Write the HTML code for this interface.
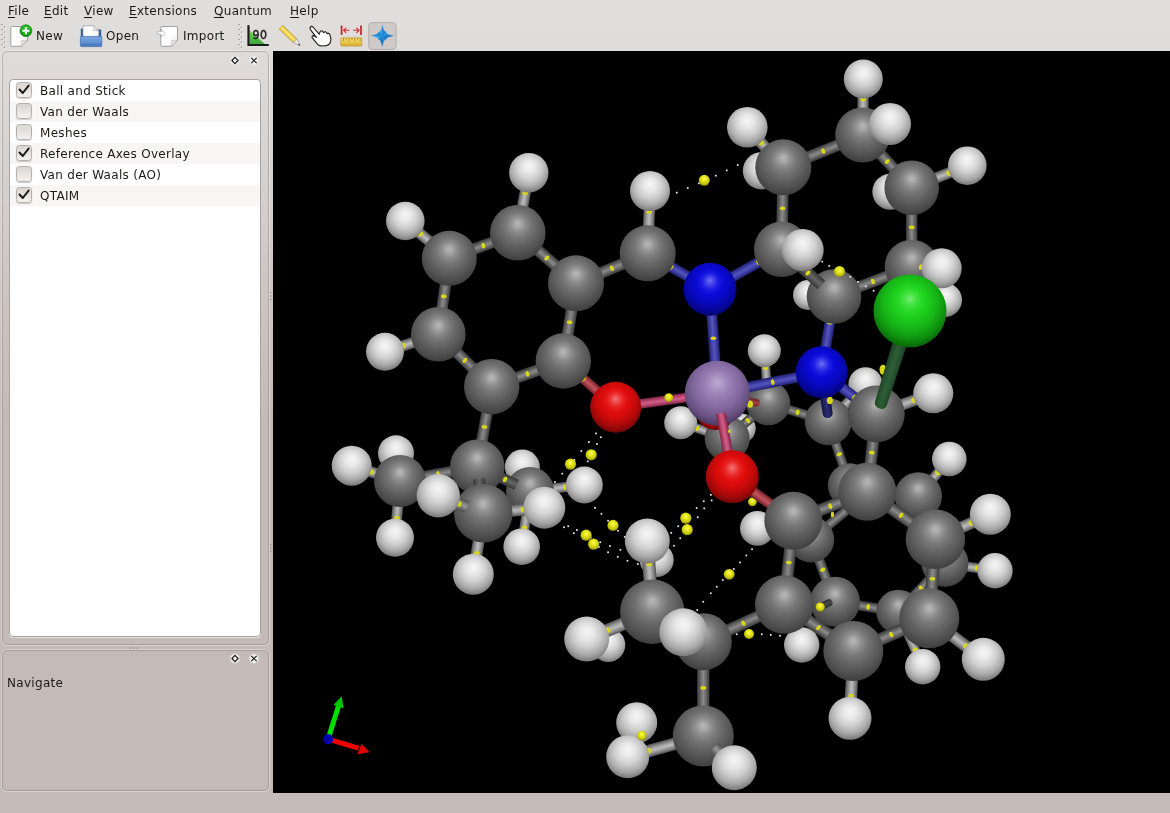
<!DOCTYPE html>
<html><head><meta charset="utf-8"><title>Avogadro</title>
<style>
html,body{margin:0;padding:0}
body{width:1170px;height:813px;overflow:hidden;position:relative;
 font-family:"DejaVu Sans","Liberation Sans",sans-serif;font-size:12px;letter-spacing:0.3px;color:#1c1a19;
 background:linear-gradient(to bottom,#e1dfdd 0px,#dedbd9 60px,#d3cfcc 200px,#c9c2bf 330px,#c4bbb8 420px,#c4bbb8 813px);}
.abs{position:absolute}
.menu,.tb,.list,.nav{will-change:opacity;opacity:.999}
.menu span{position:absolute;top:4px;white-space:nowrap}
.menu i{position:absolute;left:0;top:13px;height:1px;background:#1c1a19}
.tb span{position:absolute;top:29px;white-space:nowrap}
.dock{position:absolute;left:2px;width:265px;border:1px solid rgba(120,110,105,.38);border-radius:5px;box-shadow:0 0 0 1px rgba(255,255,255,.35)}
.list{position:absolute;left:9px;top:79px;width:250px;height:556px;background:#fff;border:1px solid #a8a19d;border-radius:4px;box-shadow:0 1px 0 rgba(255,255,255,.6);overflow:hidden}
.row{position:absolute;left:0;width:250px;height:21px}
.row.alt{background:#f8f7f6}
.row span{position:absolute;left:30px;top:4px;white-space:nowrap}
.cb{position:absolute;left:6px;top:2px;width:14px;height:14px;border-radius:3.5px;border:1px solid #b5afab;background:linear-gradient(#dad6d3,#f4f2f1);box-shadow:0 1px 1px rgba(0,0,0,.18)}
.cb svg{position:absolute;left:-1px;top:-2px}
.tbtn{position:absolute;width:11px;height:11px;border-radius:6px;background:radial-gradient(circle,#f4f3f2 0,#eceae8 60%,rgba(230,228,226,0) 100%)}
#gl{position:absolute;left:273px;top:51px;width:897px;height:742px;background:#000;overflow:hidden}
</style></head><body>
<div class="menu">
<span style="left:8px">File<i style="width:6.5px"></i></span><span style="left:44px">Edit<i style="width:7.5px"></i></span><span style="left:84px">View<i style="width:8px"></i></span><span style="left:129px">Extensions<i style="width:7.5px"></i></span><span style="left:214px">Quantum<i style="width:9.5px"></i></span><span style="left:290px">Help<i style="width:9px"></i></span>
</div>
<div class="tb">
<span style="left:36px">New</span><span style="left:106px">Open</span><span style="left:183px">Import</span>
</div>
<svg class="abs" style="left:0;top:0" width="420" height="52" viewBox="0 0 420 52">
<defs>
<linearGradient id="pg" x1="0" y1="0" x2="1" y2="1"><stop offset="0" stop-color="#fdfdfd"/><stop offset=".55" stop-color="#ffffff"/><stop offset="1" stop-color="#e4e4e4"/></linearGradient>
<linearGradient id="fold" x1="0" y1="0" x2="1" y2="1"><stop offset="0" stop-color="#ffffff"/><stop offset="1" stop-color="#c4c4c4"/></linearGradient>
<radialGradient id="gplus" cx=".5" cy=".35" r=".7"><stop offset="0" stop-color="#3ccc30"/><stop offset="1" stop-color="#0c8c10"/></radialGradient>
<linearGradient id="fblue" x1="0" y1="0" x2="0" y2="1"><stop offset="0" stop-color="#7aa8e0"/><stop offset=".75" stop-color="#5a8ccc"/><stop offset="1" stop-color="#4a78b8"/></linearGradient>
<linearGradient id="gtri" x1="0" y1="0" x2="0" y2="1"><stop offset="0" stop-color="#7ccc60"/><stop offset="1" stop-color="#38a838"/></linearGradient>
<linearGradient id="ruler" x1="0" y1="0" x2="0" y2="1"><stop offset="0" stop-color="#f4e070"/><stop offset="1" stop-color="#d8b030"/></linearGradient>
<linearGradient id="star1" x1="0" y1="0" x2="1" y2="1"><stop offset="0" stop-color="#70d0f8"/><stop offset=".5" stop-color="#2898e0"/><stop offset="1" stop-color="#0c5cb0"/></linearGradient>
</defs>
<!-- toolbar handles -->
<g fill="#8c8682">
<rect x="1.5" y="24" width="1.2" height="1.2"/><rect x="3.8" y="26.5" width="1.2" height="1.2"/><rect x="1.5" y="29" width="1.2" height="1.2"/><rect x="3.8" y="31.5" width="1.2" height="1.2"/><rect x="1.5" y="34" width="1.2" height="1.2"/><rect x="3.8" y="36.5" width="1.2" height="1.2"/><rect x="1.5" y="39" width="1.2" height="1.2"/><rect x="3.8" y="41.5" width="1.2" height="1.2"/><rect x="1.5" y="44" width="1.2" height="1.2"/><rect x="3.8" y="46.5" width="1.2" height="1.2"/>
<rect x="238.5" y="24" width="1.2" height="1.2"/><rect x="240.8" y="26.5" width="1.2" height="1.2"/><rect x="238.5" y="29" width="1.2" height="1.2"/><rect x="240.8" y="31.5" width="1.2" height="1.2"/><rect x="238.5" y="34" width="1.2" height="1.2"/><rect x="240.8" y="36.5" width="1.2" height="1.2"/><rect x="238.5" y="39" width="1.2" height="1.2"/><rect x="240.8" y="41.5" width="1.2" height="1.2"/><rect x="238.5" y="44" width="1.2" height="1.2"/><rect x="240.8" y="46.5" width="1.2" height="1.2"/>
</g>
<g fill="#f6f5f4">
<rect x="2.5" y="25" width="1.2" height="1.2"/><rect x="4.8" y="27.5" width="1.2" height="1.2"/><rect x="2.5" y="30" width="1.2" height="1.2"/><rect x="4.8" y="32.5" width="1.2" height="1.2"/><rect x="2.5" y="35" width="1.2" height="1.2"/><rect x="4.8" y="37.5" width="1.2" height="1.2"/><rect x="2.5" y="40" width="1.2" height="1.2"/><rect x="4.8" y="42.5" width="1.2" height="1.2"/><rect x="2.5" y="45" width="1.2" height="1.2"/><rect x="4.8" y="47.5" width="1.2" height="1.2"/>
<rect x="239.5" y="25" width="1.2" height="1.2"/><rect x="241.8" y="27.5" width="1.2" height="1.2"/><rect x="239.5" y="30" width="1.2" height="1.2"/><rect x="241.8" y="32.5" width="1.2" height="1.2"/><rect x="239.5" y="35" width="1.2" height="1.2"/><rect x="241.8" y="37.5" width="1.2" height="1.2"/><rect x="239.5" y="40" width="1.2" height="1.2"/><rect x="241.8" y="42.5" width="1.2" height="1.2"/><rect x="239.5" y="45" width="1.2" height="1.2"/><rect x="241.8" y="47.5" width="1.2" height="1.2"/>
</g>
<!-- New -->
<path d="M11.5 26.5 H27 Q27.5 26.5 27.5 27 V40.5 L21.5 46.3 H11.5 Q10.8 46.3 10.8 45.6 V27.2 Q10.8 26.5 11.5 26.5 Z" fill="url(#pg)" stroke="#9a9a9a" stroke-width=".9"/>
<path d="M27.5 40.5 L21.5 46.3 Q22.6 42.6 21.8 40.6 Q24.4 41.4 27.5 40.5 Z" fill="url(#fold)" stroke="#a8a8a8" stroke-width=".6"/>
<circle cx="25.9" cy="30.7" r="6" fill="url(#gplus)" stroke="#0a8a10" stroke-width=".6"/>
<path d="M25.9 27.2 V34.2 M22.4 30.7 H29.4" stroke="#fff" stroke-width="2.1"/>
<!-- Open -->
<path d="M80.8 29.6 Q80.8 28.6 81.8 28.6 H85 V38 H80.8 Z" fill="#2c5ca4"/>
<path d="M97.5 29.5 H100.2 Q101.2 29.5 101.2 30.5 V38 H97.5 Z" fill="#2c5ca4"/>
<path d="M83 25.8 H93.5 L98.8 31 V40 H83 Z" fill="url(#pg)" stroke="#a0a0a0" stroke-width=".8"/>
<path d="M93.5 25.8 L98.8 31 Q95.6 30.2 93.2 30.9 Q94.2 28.4 93.5 25.8 Z" fill="url(#fold)" stroke="#a8a8a8" stroke-width=".5"/>
<path d="M80.4 37.6 Q80.4 36.4 81.6 36.4 H100.6 Q101.8 36.4 101.8 37.6 V45.4 Q101.8 46.6 100.6 46.6 H81.6 Q80.4 46.6 80.4 45.4 Z" fill="url(#fblue)" stroke="#3c6cb0" stroke-width=".7"/>
<path d="M81 44.3 H101.2" stroke="#3e6eb4" stroke-width=".8"/>
<!-- Import -->
<path d="M161.5 26.5 H177 Q177.5 26.5 177.5 27 V40.5 L171.5 46.3 H161.5 Q160.8 46.3 160.8 45.6 V27.2 Q160.8 26.5 161.5 26.5 Z" fill="url(#pg)" stroke="#9a9a9a" stroke-width=".9"/>
<path d="M177.5 40.5 L171.5 46.3 Q172.6 42.6 171.8 40.6 Q174.4 41.4 177.5 40.5 Z" fill="url(#fold)" stroke="#a8a8a8" stroke-width=".6"/>
<path d="M157.4 31.8 H161.2 V29.2 L165 33.2 L161.2 37.2 V34.6 H157.4 Z" fill="#fff" stroke="#a4a4a4" stroke-width=".7" stroke-linejoin="round"/>
<!-- angle 90 -->
<path d="M249.6 30.3 V44 H264.8 Z" fill="url(#gtri)"/>
<path d="M248.5 25.2 V45 H268.8" fill="none" stroke="#1a1a1a" stroke-width="2.2"/>
<text x="252.6" y="38.6" font-family="'DejaVu Sans','Liberation Sans',sans-serif" font-size="11.5" font-weight="normal" fill="#1a1a1a" stroke="#1a1a1a" stroke-width=".45" textLength="14.6" lengthAdjust="spacingAndGlyphs">90</text>
<!-- pencil -->
<g transform="translate(281 27.2) rotate(44)">
<rect x="0" y="-2.5" width="19.5" height="5" fill="#f0d040" stroke="#a8882c" stroke-width=".7"/>
<rect x="0" y="-0.9" width="19.5" height="1.8" fill="#f8e478"/>
<path d="M19.5 -2.5 L26.5 0 L19.5 2.5 Z" fill="#f4f0ec" stroke="#8c8880" stroke-width=".6"/>
<path d="M24.4 -0.8 L26.8 0 L24.4 0.8 Z" fill="#333"/>
</g>
<!-- hand -->
<path d="M310.2 27.4 Q311.4 25.6 313 27 L319.2 34.2 L320.2 31.6 Q321.6 30 323 31.6 L323.6 32.6 Q325 30.8 326.6 32.6 L327.2 33.8 Q328.8 32.6 329.8 34.6 Q331.6 38.4 330.6 42 Q329.6 44.8 326.4 45.6 L321.8 46 Q318.4 45.8 316.6 43.2 L312.2 37.6 Q311.6 36 313.2 35.6 Q314.6 35.6 316.4 37.4 L310.6 29.8 Q309.6 28.4 310.2 27.4 Z" fill="#fff" stroke="#1c1c1c" stroke-width="1.1" stroke-linejoin="round"/>
<!-- measure -->
<path d="M341.6 25.6 V35 M361 25.6 V35" stroke="#c8202c" stroke-width="1.7"/>
<path d="M343.6 30.3 H349.4 M346.2 27.8 L343.6 30.3 L346.2 32.8 M359 30.3 H353.2 M356.4 27.8 L359 30.3 L356.4 32.8" fill="none" stroke="#d02834" stroke-width="1.1"/>
<rect x="340.8" y="37.8" width="21" height="8.2" rx=".8" fill="url(#ruler)" stroke="#b89428" stroke-width=".7"/>
<path d="M343.5 38 V41 M346.3 38 V40 M349.1 38 V41 M351.9 38 V40 M354.7 38 V41 M357.5 38 V40 M360.2 38 V41" stroke="#a88820" stroke-width=".8"/>
<!-- navigate (checked) -->
<rect x="368.8" y="22.6" width="27.2" height="26.8" rx="3.5" fill="#cfcac7" stroke="#b2aca8" stroke-width="1"/>
<path d="M382.3 24.6 Q383.6 31.8 386.0 32.0 Q386.4 34.6 393.9 35.7 Q386.4 36.8 386.0 39.4 Q383.6 39.6 382.3 47 Q381 39.6 378.6 39.4 Q378.2 36.8 370.6 35.7 Q378.2 34.6 378.6 32.0 Q381 31.8 382.3 24.6 Z" fill="url(#star1)"/>
<path d="M382.3 24.6 Q383.6 31.8 386.0 32.0 L382.3 35.7 Z M393.9 35.7 Q386.4 36.8 386.0 39.4 L382.3 35.7 Z M382.3 47 Q381 39.6 378.6 39.4 L382.3 35.7 Z M370.6 35.7 Q378.2 34.6 378.6 32.0 L382.3 35.7Z" fill="#1266b8" opacity=".5"/>
</svg>

<div class="dock" style="top:51px;height:592px"></div>
<div class="dock" style="top:650px;height:139px"></div>
<div class="list">
<div class="row" style="top:0"><div class="cb"><svg width="16" height="16" viewBox="0 0 16 16"><path d="M3.5 8.5 L6.8 12 L12.6 4.6" fill="none" stroke="#1a1a1a" stroke-width="2" stroke-linecap="round" stroke-linejoin="round"/></svg></div><span>Ball and Stick</span></div>
<div class="row alt" style="top:21px"><div class="cb"></div><span>Van der Waals</span></div>
<div class="row" style="top:42px"><div class="cb"></div><span>Meshes</span></div>
<div class="row alt" style="top:63px"><div class="cb"><svg width="16" height="16" viewBox="0 0 16 16"><path d="M3.5 8.5 L6.8 12 L12.6 4.6" fill="none" stroke="#1a1a1a" stroke-width="2" stroke-linecap="round" stroke-linejoin="round"/></svg></div><span>Reference Axes Overlay</span></div>
<div class="row" style="top:84px"><div class="cb"></div><span>Van der Waals (AO)</span></div>
<div class="row alt" style="top:105px"><div class="cb"><svg width="16" height="16" viewBox="0 0 16 16"><path d="M3.5 8.5 L6.8 12 L12.6 4.6" fill="none" stroke="#1a1a1a" stroke-width="2" stroke-linecap="round" stroke-linejoin="round"/></svg></div><span>QTAIM</span></div>
</div>
<div class="abs nav" style="left:7px;top:676px">Navigate</div>
<svg class="abs" style="left:225px;top:52px" width="45" height="18" viewBox="225 52 45 18">
<defs><radialGradient id="halo"><stop offset="0" stop-color="#f6f5f4"/><stop offset=".7" stop-color="#efedeb"/><stop offset="1" stop-color="#e4e1df" stop-opacity="0"/></radialGradient></defs>
<circle cx="235" cy="60.5" r="5.6" fill="url(#halo)"/><circle cx="254" cy="60.5" r="5.6" fill="url(#halo)"/>
<path d="M235 57.4 L238.1 60.5 L235 63.6 L231.9 60.5 Z" fill="none" stroke="#1c1c1c" stroke-width="1.2"/>
<path d="M251.3 57.8 L256.7 63.2 M256.7 57.8 L251.3 63.2" stroke="#1c1c1c" stroke-width="1.2"/>
</svg>
<svg class="abs" style="left:225px;top:650px" width="45" height="18" viewBox="225 52 45 18">
<circle cx="235" cy="60.5" r="5.6" fill="url(#halo)"/><circle cx="254" cy="60.5" r="5.6" fill="url(#halo)"/>
<path d="M235 57.4 L238.1 60.5 L235 63.6 L231.9 60.5 Z" fill="none" stroke="#1c1c1c" stroke-width="1.2"/>
<path d="M251.3 57.8 L256.7 63.2 M256.7 57.8 L251.3 63.2" stroke="#1c1c1c" stroke-width="1.2"/>
</svg>
<svg class="abs" style="left:128px;top:646px" width="14" height="4"><rect x="2" y="1.5" width="1.2" height="1.2" fill="#8c8682"/><rect x="5.5" y="1.5" width="1.2" height="1.2" fill="#8c8682"/><rect x="9" y="1.5" width="1.2" height="1.2" fill="#8c8682"/></svg>
<svg class="abs" style="left:268px;top:290px" width="5" height="14"><rect x="2" y="2" width="1.2" height="1.2" fill="#8c8682"/><rect x="2" y="5.5" width="1.2" height="1.2" fill="#8c8682"/><rect x="2" y="9" width="1.2" height="1.2" fill="#8c8682"/></svg>
<svg class="abs" style="left:268px;top:542px" width="5" height="14"><rect x="2" y="2" width="1.2" height="1.2" fill="#8c8682"/><rect x="2" y="5.5" width="1.2" height="1.2" fill="#8c8682"/><rect x="2" y="9" width="1.2" height="1.2" fill="#8c8682"/></svg>

<div id="gl">
<svg width="897" height="742" viewBox="273 51 897 742" style="position:absolute;left:0;top:0" shape-rendering="geometricPrecision"><defs>
<radialGradient id="gH" cx=".5" cy="0.41" r="0.62" fx=".5" fy="0.33"><stop offset="0" stop-color="#f6f6f6"/><stop offset="0.25" stop-color="#e8e8e8"/><stop offset="0.5" stop-color="#cecece"/><stop offset="0.75" stop-color="#a8a8a8"/><stop offset="1" stop-color="#6e6e6e"/></radialGradient>
<radialGradient id="gC" cx=".5" cy="0.41" r="0.62" fx=".5" fy="0.33"><stop offset="0" stop-color="#b8b8b8"/><stop offset="0.1" stop-color="#a8a8a8"/><stop offset="0.22" stop-color="#8e8e8e"/><stop offset="0.38" stop-color="#767676"/><stop offset="0.58" stop-color="#626262"/><stop offset="0.8" stop-color="#4e4e4e"/><stop offset="1" stop-color="#3a3a3a"/></radialGradient>
<radialGradient id="gN" cx=".5" cy="0.41" r="0.62" fx=".5" fy="0.33"><stop offset="0" stop-color="#7070f0"/><stop offset="0.12" stop-color="#4444ec"/><stop offset="0.25" stop-color="#1c1ce4"/><stop offset="0.4" stop-color="#0a0ad8"/><stop offset="0.6" stop-color="#0808c0"/><stop offset="0.8" stop-color="#06069c"/><stop offset="1" stop-color="#040460"/></radialGradient>
<radialGradient id="gO" cx=".5" cy="0.41" r="0.62" fx=".5" fy="0.33"><stop offset="0" stop-color="#f07878"/><stop offset="0.12" stop-color="#ee4848"/><stop offset="0.25" stop-color="#e82020"/><stop offset="0.4" stop-color="#e00c0c"/><stop offset="0.6" stop-color="#c80a0a"/><stop offset="0.8" stop-color="#a00808"/><stop offset="1" stop-color="#600404"/></radialGradient>
<radialGradient id="gMn" cx=".5" cy="0.41" r="0.62" fx=".5" fy="0.33"><stop offset="0" stop-color="#c0acd0"/><stop offset="0.12" stop-color="#b09ac6"/><stop offset="0.25" stop-color="#a086ba"/><stop offset="0.4" stop-color="#9276ae"/><stop offset="0.6" stop-color="#80669c"/><stop offset="0.8" stop-color="#665080"/><stop offset="1" stop-color="#403052"/></radialGradient>
<radialGradient id="gCl" cx=".5" cy="0.41" r="0.62" fx=".5" fy="0.33"><stop offset="0" stop-color="#78ec78"/><stop offset="0.12" stop-color="#48e448"/><stop offset="0.25" stop-color="#28da28"/><stop offset="0.4" stop-color="#1ccc1c"/><stop offset="0.6" stop-color="#16b416"/><stop offset="0.8" stop-color="#0e900e"/><stop offset="1" stop-color="#075807"/></radialGradient>
<radialGradient id="gY" cx=".5" cy="0.41" r="0.62" fx=".5" fy="0.33"><stop offset="0" stop-color="#fafa70"/><stop offset="0.3" stop-color="#ecec20"/><stop offset="0.7" stop-color="#c8c810"/><stop offset="1" stop-color="#808008"/></radialGradient>
<linearGradient id="bC" x1="0" y1="0" x2="0" y2="1"><stop offset="0" stop-color="#383838"/><stop offset=".28" stop-color="#686868"/><stop offset=".5" stop-color="#8a8a8a"/><stop offset=".72" stop-color="#686868"/><stop offset="1" stop-color="#383838"/></linearGradient>
<linearGradient id="bH" x1="0" y1="0" x2="0" y2="1"><stop offset="0" stop-color="#525252"/><stop offset=".28" stop-color="#969696"/><stop offset=".5" stop-color="#bcbcbc"/><stop offset=".72" stop-color="#969696"/><stop offset="1" stop-color="#525252"/></linearGradient>
<linearGradient id="bN" x1="0" y1="0" x2="0" y2="1"><stop offset="0" stop-color="#20206c"/><stop offset=".25" stop-color="#3a3aa0"/><stop offset=".5" stop-color="#5454bc"/><stop offset=".75" stop-color="#3a3aa0"/><stop offset="1" stop-color="#20206c"/></linearGradient>
<linearGradient id="bO" x1="0" y1="0" x2="0" y2="1"><stop offset="0" stop-color="#742444"/><stop offset=".25" stop-color="#b44068"/><stop offset=".5" stop-color="#d06088"/><stop offset=".75" stop-color="#b44068"/><stop offset="1" stop-color="#742444"/></linearGradient>
<linearGradient id="bOC" x1="0" y1="0" x2="0" y2="1"><stop offset="0" stop-color="#6a2028"/><stop offset=".25" stop-color="#a03c44"/><stop offset=".5" stop-color="#c4545c"/><stop offset=".75" stop-color="#a03c44"/><stop offset="1" stop-color="#6a2028"/></linearGradient>
<linearGradient id="bCl" x1="0" y1="0" x2="0" y2="1"><stop offset="0" stop-color="#1c4024"/><stop offset=".3" stop-color="#28542f"/><stop offset=".5" stop-color="#2e5e36"/><stop offset=".7" stop-color="#28542f"/><stop offset="1" stop-color="#1c4024"/></linearGradient>
<linearGradient id="bN2" x1="0" y1="0" x2="0" y2="1"><stop offset="0" stop-color="#141444"/><stop offset=".5" stop-color="#2c2c74"/><stop offset="1" stop-color="#141444"/></linearGradient>
<linearGradient id="bD" x1="0" y1="0" x2="0" y2="1"><stop offset="0" stop-color="#2c2c2c"/><stop offset=".5" stop-color="#4a4a4a"/><stop offset="1" stop-color="#2c2c2c"/></linearGradient>
<linearGradient id="bR" x1="0" y1="0" x2="0" y2="1"><stop offset="0" stop-color="#6a2424"/><stop offset=".5" stop-color="#a04040"/><stop offset="1" stop-color="#6a2424"/></linearGradient>
<linearGradient id="bCd" x1="0" y1="0" x2="0" y2="1"><stop offset="0" stop-color="#363636"/><stop offset=".5" stop-color="#666666"/><stop offset="1" stop-color="#363636"/></linearGradient>
<linearGradient id="bHd" x1="0" y1="0" x2="0" y2="1"><stop offset="0" stop-color="#4e4e4e"/><stop offset=".5" stop-color="#989898"/><stop offset="1" stop-color="#4e4e4e"/></linearGradient>
</defs>
<rect x="675.9" y="191.8" width="1.7" height="1.7" fill="#f0f0f0"/><rect x="686.9" y="187.2" width="1.7" height="1.7" fill="#f0f0f0"/><rect x="698.1" y="182.5" width="1.7" height="1.7" fill="#f0f0f0"/><rect x="714.9" y="174.8" width="1.7" height="1.7" fill="#f0f0f0"/><rect x="725.9" y="169.5" width="1.7" height="1.7" fill="#f0f0f0"/><rect x="736.9" y="164.2" width="1.7" height="1.7" fill="#f0f0f0"/>
<rect x="595.2" y="432.6" width="1.7" height="1.7" fill="#f0f0f0"/><rect x="599.9" y="436.4" width="1.7" height="1.7" fill="#f0f0f0"/><rect x="588.0" y="441.3" width="1.7" height="1.7" fill="#f0f0f0"/><rect x="596.1" y="443.2" width="1.7" height="1.7" fill="#f0f0f0"/><rect x="580.5" y="450.1" width="1.7" height="1.7" fill="#f0f0f0"/><rect x="586.9" y="460.5" width="1.7" height="1.7" fill="#f0f0f0"/><rect x="573.5" y="459.0" width="1.7" height="1.7" fill="#f0f0f0"/><rect x="561.4" y="472.8" width="1.7" height="1.7" fill="#f0f0f0"/><rect x="554.1" y="481.2" width="1.7" height="1.7" fill="#f0f0f0"/>
<rect x="589.0" y="500.0" width="1.7" height="1.7" fill="#f0f0f0"/><rect x="594.2" y="507.0" width="1.7" height="1.7" fill="#f0f0f0"/><rect x="600.6" y="512.9" width="1.7" height="1.7" fill="#f0f0f0"/><rect x="607.2" y="519.9" width="1.7" height="1.7" fill="#f0f0f0"/><rect x="617.2" y="529.9" width="1.7" height="1.7" fill="#f0f0f0"/><rect x="623.9" y="536.1" width="1.7" height="1.7" fill="#f0f0f0"/>
<rect x="558.5" y="520.2" width="1.7" height="1.7" fill="#f0f0f0"/><rect x="563.2" y="526.4" width="1.7" height="1.7" fill="#f0f0f0"/><rect x="567.4" y="525.4" width="1.7" height="1.7" fill="#f0f0f0"/><rect x="573.0" y="532.4" width="1.7" height="1.7" fill="#f0f0f0"/><rect x="576.0" y="529.2" width="1.7" height="1.7" fill="#f0f0f0"/><rect x="589.9" y="536.8" width="1.7" height="1.7" fill="#f0f0f0"/><rect x="599.4" y="541.4" width="1.7" height="1.7" fill="#f0f0f0"/><rect x="598.0" y="546.1" width="1.7" height="1.7" fill="#f0f0f0"/><rect x="609.1" y="545.2" width="1.7" height="1.7" fill="#f0f0f0"/><rect x="607.2" y="551.4" width="1.7" height="1.7" fill="#f0f0f0"/><rect x="619.5" y="548.9" width="1.7" height="1.7" fill="#f0f0f0"/><rect x="616.9" y="555.9" width="1.7" height="1.7" fill="#f0f0f0"/><rect x="626.6" y="559.9" width="1.7" height="1.7" fill="#f0f0f0"/><rect x="637.0" y="563.1" width="1.7" height="1.7" fill="#f0f0f0"/>
<rect x="710.0" y="494.0" width="1.7" height="1.7" fill="#f0f0f0"/><rect x="710.8" y="499.6" width="1.7" height="1.7" fill="#f0f0f0"/><rect x="702.9" y="500.4" width="1.7" height="1.7" fill="#f0f0f0"/><rect x="703.4" y="507.5" width="1.7" height="1.7" fill="#f0f0f0"/><rect x="695.8" y="507.2" width="1.7" height="1.7" fill="#f0f0f0"/><rect x="696.9" y="516.4" width="1.7" height="1.7" fill="#f0f0f0"/><rect x="677.4" y="525.4" width="1.7" height="1.7" fill="#f0f0f0"/><rect x="670.4" y="532.0" width="1.7" height="1.7" fill="#f0f0f0"/><rect x="679.4" y="537.4" width="1.7" height="1.7" fill="#f0f0f0"/><rect x="673.1" y="544.9" width="1.7" height="1.7" fill="#f0f0f0"/>
<rect x="755.9" y="541.0" width="1.7" height="1.7" fill="#f0f0f0"/><rect x="751.2" y="548.4" width="1.7" height="1.7" fill="#f0f0f0"/><rect x="745.5" y="554.6" width="1.7" height="1.7" fill="#f0f0f0"/><rect x="739.1" y="561.6" width="1.7" height="1.7" fill="#f0f0f0"/><rect x="732.9" y="568.1" width="1.7" height="1.7" fill="#f0f0f0"/><rect x="721.9" y="579.1" width="1.7" height="1.7" fill="#f0f0f0"/><rect x="715.9" y="585.9" width="1.7" height="1.7" fill="#f0f0f0"/><rect x="709.9" y="592.4" width="1.7" height="1.7" fill="#f0f0f0"/><rect x="702.4" y="600.9" width="1.7" height="1.7" fill="#f0f0f0"/><rect x="696.4" y="609.1" width="1.7" height="1.7" fill="#f0f0f0"/>
<rect x="735.9" y="633.4" width="1.7" height="1.7" fill="#f0f0f0"/><rect x="760.9" y="633.4" width="1.7" height="1.7" fill="#f0f0f0"/><rect x="769.9" y="634.1" width="1.7" height="1.7" fill="#f0f0f0"/><rect x="779.1" y="634.9" width="1.7" height="1.7" fill="#f0f0f0"/>
<circle cx="740.7" cy="428.5" r="15.0" fill="url(#gH)"/>
<circle cx="808.0" cy="295.0" r="15.0" fill="url(#gH)"/>
<rect x="0" y="-4.91" width="20.21" height="9.83" fill="url(#bHd)" transform="translate(813.83 295.34) rotate(3.30)"/>
<ellipse cx="824.0" cy="295.9" rx="1.8" ry="2.9" fill="#d8d818" transform="rotate(3.3 824.0 295.9)"/>
<rect x="0" y="-4.76" width="67.26" height="9.53" fill="url(#bC)" transform="translate(898.30 611.70) rotate(-46.02)"/>
<rect x="0" y="-4.92" width="64.09" height="9.84" fill="url(#bC)" transform="translate(898.30 611.70) rotate(-171.02)"/>
<rect x="0" y="-4.77" width="60.17" height="9.53" fill="url(#bH)" transform="translate(898.30 611.70) rotate(66.08)"/>
<rect x="0" y="-4.78" width="69.23" height="9.57" fill="url(#bC)" transform="translate(849.90 485.30) rotate(8.89)"/>
<rect x="0" y="-4.76" width="67.17" height="9.53" fill="url(#bC)" transform="translate(849.90 485.30) rotate(-108.76)"/>
<rect x="0" y="-4.76" width="62.76" height="9.53" fill="url(#bC)" transform="translate(768.30 403.30) rotate(17.05)"/>
<rect x="0" y="-4.59" width="52.75" height="9.19" fill="url(#bH)" transform="translate(768.30 403.30) rotate(-94.35)"/>
<rect x="0" y="-4.66" width="54.11" height="9.32" fill="url(#bC)" transform="translate(768.30 403.30) rotate(139.42)"/>
<ellipse cx="921.1" cy="588.0" rx="1.8" ry="2.9" fill="#d8d818" transform="rotate(-46.0 921.1 588.0)"/>
<ellipse cx="868.1" cy="606.9" rx="1.8" ry="2.9" fill="#d8d818" transform="rotate(-171.0 868.1 606.9)"/>
<ellipse cx="915.1" cy="649.6" rx="1.8" ry="2.9" fill="#d8d818" transform="rotate(66.1 915.1 649.6)"/>
<ellipse cx="883.3" cy="490.5" rx="1.8" ry="2.9" fill="#d8d818" transform="rotate(8.9 883.3 490.5)"/>
<ellipse cx="839.3" cy="454.2" rx="1.8" ry="2.9" fill="#d8d818" transform="rotate(-108.8 839.3 454.2)"/>
<ellipse cx="797.6" cy="412.3" rx="1.8" ry="2.9" fill="#d8d818" transform="rotate(17.0 797.6 412.3)"/>
<ellipse cx="765.6" cy="368.1" rx="1.8" ry="2.9" fill="#d8d818" transform="rotate(-94.3 765.6 368.1)"/>
<ellipse cx="747.9" cy="420.7" rx="1.8" ry="2.9" fill="#d8d818" transform="rotate(139.4 747.9 420.7)"/>
<circle cx="849.9" cy="485.3" r="22.0" fill="url(#gC)"/>
<circle cx="898.3" cy="611.7" r="22.0" fill="url(#gC)"/>
<circle cx="768.3" cy="403.3" r="22.0" fill="url(#gC)"/>
<path d="M0 -4.00 L21.75 -3.80 A3.19 3.80 0 0 1 21.75 3.80 L0 4.00 Z" fill="url(#bR)" transform="translate(735.00 399.50) rotate(8.73)"/>
<ellipse cx="750.0" cy="404.2" rx="3.0" ry="3.6" fill="#d8d818"/>
<rect x="0" y="-4.64" width="49.11" height="9.29" fill="url(#bH)" transform="translate(727.20 438.50) rotate(-161.23)"/>
<ellipse cx="697.3" cy="428.3" rx="1.8" ry="2.9" fill="#d8d818" transform="rotate(-161.2 697.3 428.3)"/>
<circle cx="727.2" cy="438.5" r="22.5" fill="url(#gC)"/>
<circle cx="715.5" cy="410.4" r="19.6" fill="url(#gO)"/>
<rect x="0" y="-4.46" width="14.41" height="8.92" fill="url(#bO)" transform="translate(715.79 407.63) rotate(-83.99)"/>
<ellipse cx="715.7" cy="408.3" rx="1.8" ry="2.9" fill="#d8d818" transform="rotate(-84.0 715.7 408.3)"/>
<rect x="0" y="-5.03" width="66.50" height="10.05" fill="url(#bC)" transform="translate(811.20 539.60) rotate(69.03)"/>
<rect x="0" y="-4.82" width="54.97" height="9.65" fill="url(#bH)" transform="translate(811.20 539.60) rotate(-168.14)"/>
<path d="M0 -4.90 L51.77 -4.90 L51.77 4.90 L0 4.90 Z" fill="url(#bC)" transform="translate(811.20 539.60) rotate(-39.75)"/>
<ellipse cx="822.7" cy="569.7" rx="1.8" ry="2.9" fill="#d8d818" transform="rotate(69.0 822.7 569.7)"/>
<ellipse cx="775.4" cy="532.1" rx="1.8" ry="2.9" fill="#d8d818" transform="rotate(-168.1 775.4 532.1)"/>
<circle cx="811.2" cy="539.6" r="23.0" fill="url(#gC)"/>
<ellipse cx="832.4" cy="514.6" rx="1.6" ry="3.0" fill="#d8d818"/>
<circle cx="764.3" cy="350.7" r="16.5" fill="url(#gH)"/>
<circle cx="680.7" cy="422.7" r="16.5" fill="url(#gH)"/>
<rect x="0" y="-4.94" width="72.40" height="9.88" fill="url(#bC)" transform="translate(945.00 563.30) rotate(-111.64)"/>
<rect x="0" y="-4.92" width="50.54" height="9.83" fill="url(#bH)" transform="translate(945.00 563.30) rotate(8.42)"/>
<rect x="0" y="-4.83" width="52.75" height="9.66" fill="url(#bH)" transform="translate(828.30 421.70) rotate(-45.15)"/>
<ellipse cx="931.7" cy="529.7" rx="1.8" ry="2.9" fill="#d8d818" transform="rotate(-111.6 931.7 529.7)"/>
<ellipse cx="976.5" cy="568.0" rx="1.8" ry="2.9" fill="#d8d818" transform="rotate(8.4 976.5 568.0)"/>
<ellipse cx="852.7" cy="397.1" rx="1.8" ry="2.9" fill="#d8d818" transform="rotate(-45.2 852.7 397.1)"/>
<circle cx="945.0" cy="563.3" r="23.5" fill="url(#gC)"/>
<circle cx="828.3" cy="421.7" r="23.5" fill="url(#gC)"/>
<circle cx="522.3" cy="467.0" r="17.5" fill="url(#gH)"/>
<path d="M0 -5.25 L41.93 -5.00 A4.20 5.00 0 0 1 41.93 5.00 L0 5.25 Z" fill="url(#bN2)" transform="translate(821.70 372.30) rotate(81.77)"/>
<rect x="0" y="-4.81" width="18.47" height="9.61" fill="url(#bHd)" transform="translate(524.36 473.41) rotate(72.21)"/>
<ellipse cx="528.0" cy="484.6" rx="1.8" ry="2.9" fill="#d8d818" transform="rotate(72.2 528.0 484.6)"/>
<ellipse cx="829.8" cy="400.4" rx="3.0" ry="3.6" fill="#d8d818"/>
<rect x="0" y="-4.88" width="48.27" height="9.76" fill="url(#bH)" transform="translate(918.30 496.00) rotate(-50.04)"/>
<ellipse cx="937.5" cy="473.0" rx="1.8" ry="2.9" fill="#d8d818" transform="rotate(-50.0 937.5 473.0)"/>
<circle cx="918.3" cy="496.0" r="23.7" fill="url(#gC)"/>
<rect x="0" y="-5.08" width="54.63" height="10.16" fill="url(#bH)" transform="translate(530.00 491.00) rotate(-6.31)"/>
<rect x="0" y="-5.05" width="56.32" height="10.11" fill="url(#bH)" transform="translate(530.00 491.00) rotate(98.48)"/>
<ellipse cx="564.9" cy="487.1" rx="1.8" ry="2.9" fill="#d8d818" transform="rotate(-6.3 564.9 487.1)"/>
<ellipse cx="524.5" cy="527.6" rx="1.8" ry="2.9" fill="#d8d818" transform="rotate(98.5 524.5 527.6)"/>
<circle cx="530.0" cy="491.0" r="24.0" fill="url(#gC)"/>
<rect x="0" y="-5.37" width="43.42" height="10.74" fill="url(#bCd)" transform="translate(516.73 484.88) rotate(-155.25)"/>
<ellipse cx="505.1" cy="479.5" rx="1.8" ry="2.9" fill="#d8d818" transform="rotate(-155.2 505.1 479.5)"/>
<rect x="0" y="-5.17" width="47.09" height="10.34" fill="url(#bH)" transform="translate(945.00 300.00) rotate(-135.00)"/>
<ellipse cx="932.3" cy="287.3" rx="1.8" ry="2.9" fill="#d8d818" transform="rotate(-135.0 932.3 287.3)"/>
<circle cx="656.7" cy="560.0" r="17.0" fill="url(#gH)"/>
<circle cx="608.3" cy="645.0" r="17.0" fill="url(#gH)"/>
<circle cx="945.0" cy="300.0" r="17.0" fill="url(#gH)"/>
<circle cx="865.5" cy="384.3" r="17.1" fill="url(#gH)"/>
<circle cx="949.3" cy="459.0" r="17.3" fill="url(#gH)"/>
<circle cx="757.4" cy="528.3" r="17.4" fill="url(#gH)"/>
<circle cx="704.3" cy="180.3" r="5.5" fill="url(#gY)"/>
<circle cx="591.2" cy="454.8" r="5.6" fill="url(#gY)"/>
<circle cx="570.5" cy="464.2" r="5.6" fill="url(#gY)"/>
<circle cx="613.0" cy="525.4" r="5.6" fill="url(#gY)"/>
<circle cx="586.1" cy="535.2" r="5.6" fill="url(#gY)"/>
<circle cx="593.6" cy="544.2" r="5.6" fill="url(#gY)"/>
<circle cx="685.8" cy="518.2" r="5.6" fill="url(#gY)"/>
<circle cx="687.2" cy="529.7" r="5.6" fill="url(#gY)"/>
<circle cx="729.2" cy="574.3" r="5.4" fill="url(#gY)"/>
<circle cx="749.0" cy="634.0" r="5.0" fill="url(#gY)"/>
<rect x="0" y="-5.07" width="54.62" height="10.14" fill="url(#bH)" transform="translate(835.00 601.70) rotate(127.56)"/>
<ellipse cx="813.1" cy="630.2" rx="1.8" ry="2.9" fill="#d8d818" transform="rotate(127.6 813.1 630.2)"/>
<circle cx="835.0" cy="601.7" r="25.0" fill="url(#gC)"/>
<path d="M0 -3.75 L9.97 -3.50 A2.94 3.50 0 0 1 9.97 3.50 L0 3.75 Z" fill="url(#bD)" transform="translate(820.50 606.80) rotate(-25.54)"/>
<circle cx="820.2" cy="607.0" r="4.6" fill="url(#gY)"/>
<circle cx="995.0" cy="570.7" r="17.7" fill="url(#gH)"/>
<circle cx="922.7" cy="666.7" r="17.7" fill="url(#gH)"/>
<circle cx="801.7" cy="645.0" r="17.7" fill="url(#gH)"/>
<circle cx="396.0" cy="453.3" r="18.0" fill="url(#gH)"/>
<circle cx="890.3" cy="191.8" r="18.0" fill="url(#gH)"/>
<rect x="0" y="-5.21" width="20.89" height="10.43" fill="url(#bHd)" transform="translate(397.01 460.32) rotate(81.78)"/>
<rect x="0" y="-5.34" width="16.40" height="10.69" fill="url(#bHd)" transform="translate(895.59 190.79) rotate(-10.85)"/>
<ellipse cx="398.7" cy="472.1" rx="1.8" ry="2.9" fill="#d8d818" transform="rotate(81.8 398.7 472.1)"/>
<ellipse cx="909.0" cy="188.2" rx="1.8" ry="2.9" fill="#d8d818" transform="rotate(-10.8 909.0 188.2)"/>
<rect x="0" y="-5.58" width="78.61" height="11.16" fill="url(#bC)" transform="translate(400.00 481.00) rotate(-10.48)"/>
<rect x="0" y="-5.50" width="50.67" height="11.00" fill="url(#bH)" transform="translate(400.00 481.00) rotate(-162.42)"/>
<rect x="0" y="-5.36" width="56.92" height="10.71" fill="url(#bH)" transform="translate(400.00 481.00) rotate(95.04)"/>
<ellipse cx="438.0" cy="474.0" rx="1.8" ry="2.9" fill="#d8d818" transform="rotate(-10.5 438.0 474.0)"/>
<ellipse cx="371.7" cy="472.0" rx="1.8" ry="2.9" fill="#d8d818" transform="rotate(-162.4 371.7 472.0)"/>
<ellipse cx="396.8" cy="517.8" rx="1.8" ry="2.9" fill="#d8d818" transform="rotate(95.0 396.8 517.8)"/>
<circle cx="521.7" cy="546.7" r="18.3" fill="url(#gH)"/>
<circle cx="400.0" cy="481.0" r="26.0" fill="url(#gC)"/>
<circle cx="584.3" cy="485.0" r="18.5" fill="url(#gH)"/>
<circle cx="761.4" cy="170.8" r="18.6" fill="url(#gH)"/>
<rect x="0" y="-5.50" width="16.67" height="11.00" fill="url(#bHd)" transform="translate(766.83 169.93) rotate(-9.08)"/>
<ellipse cx="780.8" cy="167.7" rx="1.8" ry="2.9" fill="#d8d818" transform="rotate(-9.1 780.8 167.7)"/>
<rect x="0" y="-5.49" width="56.07" height="10.98" fill="url(#bH)" transform="translate(385.00 351.70) rotate(-18.08)"/>
<ellipse cx="404.0" cy="345.5" rx="1.8" ry="2.9" fill="#d8d818" transform="rotate(-18.1 404.0 345.5)"/>
<rect x="0" y="-5.68" width="79.00" height="11.37" fill="url(#bC)" transform="translate(911.70 266.70) rotate(-90.00)"/>
<rect x="0" y="-5.68" width="83.22" height="11.37" fill="url(#bC)" transform="translate(911.70 266.70) rotate(159.02)"/>
<ellipse cx="911.7" cy="227.3" rx="1.8" ry="2.9" fill="#d8d818" transform="rotate(-90.0 911.7 227.3)"/>
<ellipse cx="873.0" cy="281.5" rx="1.8" ry="2.9" fill="#d8d818" transform="rotate(159.0 873.0 281.5)"/>
<circle cx="385.0" cy="351.7" r="19.0" fill="url(#gH)"/>
<circle cx="395.0" cy="537.7" r="19.0" fill="url(#gH)"/>
<circle cx="911.7" cy="266.7" r="27.0" fill="url(#gC)"/>
<rect x="0" y="-5.60" width="19.41" height="11.20" fill="url(#bHd)" transform="translate(922.31 267.27) rotate(3.05)"/>
<ellipse cx="920.7" cy="267.2" rx="1.8" ry="2.9" fill="#d8d818" transform="rotate(3.1 920.7 267.2)"/>
<rect x="0" y="-5.05" width="69.92" height="10.10" fill="url(#bOC)" transform="translate(615.70 407.30) rotate(-138.54)"/>
<rect x="0" y="-4.85" width="102.56" height="9.71" fill="url(#bO)" transform="translate(615.70 407.30) rotate(-7.85)"/>
<ellipse cx="583.5" cy="378.8" rx="1.8" ry="2.9" fill="#d8d818" transform="rotate(-138.5 583.5 378.8)"/>
<rect x="0" y="-5.25" width="106.49" height="10.50" fill="url(#bN)" transform="translate(821.70 372.30) rotate(168.63)"/>
<rect x="0" y="-5.21" width="76.79" height="10.42" fill="url(#bN)" transform="translate(821.70 372.30) rotate(-80.78)"/>
<rect x="0" y="-5.32" width="68.70" height="10.63" fill="url(#bN)" transform="translate(821.70 372.30) rotate(37.37)"/>
<ellipse cx="772.7" cy="382.2" rx="1.8" ry="2.9" fill="#d8d818" transform="rotate(168.6 772.7 382.2)"/>
<ellipse cx="829.8" cy="322.7" rx="1.8" ry="2.9" fill="#d8d818" transform="rotate(-80.8 829.8 322.7)"/>
<ellipse cx="854.4" cy="397.2" rx="1.8" ry="2.9" fill="#d8d818" transform="rotate(37.4 854.4 397.2)"/>
<circle cx="615.7" cy="407.3" r="25.5" fill="url(#gO)"/>
<circle cx="821.7" cy="372.3" r="26.0" fill="url(#gN)"/>
<circle cx="668.7" cy="397.6" r="4.4" fill="url(#gY)"/>
<rect x="0" y="-5.74" width="76.79" height="11.47" fill="url(#bC)" transform="translate(438.30 334.30) rotate(-81.76)"/>
<rect x="0" y="-5.76" width="74.82" height="11.52" fill="url(#bC)" transform="translate(438.30 334.30) rotate(44.46)"/>
<rect x="0" y="-5.76" width="81.29" height="11.52" fill="url(#bC)" transform="translate(477.30 466.70) rotate(-79.80)"/>
<rect x="0" y="-5.74" width="71.96" height="11.47" fill="url(#bC)" transform="translate(911.70 187.70) rotate(-132.92)"/>
<rect x="0" y="-5.53" width="59.79" height="11.06" fill="url(#bH)" transform="translate(911.70 187.70) rotate(-21.59)"/>
<ellipse cx="443.8" cy="296.4" rx="1.8" ry="2.9" fill="#d8d818" transform="rotate(-81.8 443.8 296.4)"/>
<ellipse cx="464.9" cy="360.4" rx="1.8" ry="2.9" fill="#d8d818" transform="rotate(44.5 464.9 360.4)"/>
<ellipse cx="484.5" cy="426.9" rx="1.8" ry="2.9" fill="#d8d818" transform="rotate(-79.8 484.5 426.9)"/>
<ellipse cx="887.3" cy="161.4" rx="1.8" ry="2.9" fill="#d8d818" transform="rotate(-132.9 887.3 161.4)"/>
<ellipse cx="948.4" cy="173.2" rx="1.8" ry="2.9" fill="#d8d818" transform="rotate(-21.6 948.4 173.2)"/>
<circle cx="438.3" cy="334.3" r="27.3" fill="url(#gC)"/>
<circle cx="477.3" cy="466.7" r="27.3" fill="url(#gC)"/>
<circle cx="834.0" cy="296.5" r="27.3" fill="url(#gC)"/>
<circle cx="911.7" cy="187.7" r="27.3" fill="url(#gC)"/>
<rect x="0" y="-5.93" width="34.78" height="11.85" fill="url(#bCd)" transform="translate(478.86 478.80) rotate(82.66)"/>
<rect x="0" y="-5.76" width="53.37" height="11.52" fill="url(#bCd)" transform="translate(821.32 285.05) rotate(-137.93)"/>
<ellipse cx="480.2" cy="489.0" rx="1.8" ry="2.9" fill="#d8d818" transform="rotate(82.7 480.2 489.0)"/>
<ellipse cx="808.0" cy="273.0" rx="1.8" ry="2.9" fill="#d8d818" transform="rotate(-137.9 808.0 273.0)"/>
<rect x="0" y="-5.55" width="57.68" height="11.10" fill="url(#bH)" transform="translate(405.30 221.00) rotate(40.29)"/>
<ellipse cx="420.8" cy="234.1" rx="1.8" ry="2.9" fill="#d8d818" transform="rotate(40.3 420.8 234.1)"/>
<circle cx="405.3" cy="221.0" r="19.3" fill="url(#gH)"/>
<circle cx="967.3" cy="165.7" r="19.3" fill="url(#gH)"/>
<rect x="0" y="-5.79" width="73.09" height="11.58" fill="url(#bC)" transform="translate(449.30 258.30) rotate(-20.42)"/>
<rect x="0" y="-5.58" width="56.00" height="11.16" fill="url(#bH)" transform="translate(862.70 135.00) rotate(-89.39)"/>
<rect x="0" y="-5.81" width="85.72" height="11.62" fill="url(#bC)" transform="translate(862.70 135.00) rotate(157.86)"/>
<ellipse cx="483.4" cy="245.6" rx="1.8" ry="2.9" fill="#d8d818" transform="rotate(-20.4 483.4 245.6)"/>
<ellipse cx="863.1" cy="99.5" rx="1.8" ry="2.9" fill="#d8d818" transform="rotate(-89.4 863.1 99.5)"/>
<ellipse cx="823.2" cy="151.1" rx="1.8" ry="2.9" fill="#d8d818" transform="rotate(157.9 823.2 151.1)"/>
<circle cx="449.3" cy="258.3" r="27.5" fill="url(#gC)"/>
<circle cx="862.7" cy="135.0" r="27.5" fill="url(#gC)"/>
<rect x="0" y="-5.80" width="19.18" height="11.59" fill="url(#bHd)" transform="translate(872.21 131.17) rotate(-21.95)"/>
<rect x="0" y="-5.83" width="78.73" height="11.66" fill="url(#bC)" transform="translate(563.30 361.00) rotate(-80.72)"/>
<rect x="0" y="-5.80" width="76.07" height="11.60" fill="url(#bC)" transform="translate(563.30 361.00) rotate(160.25)"/>
<rect x="0" y="-5.33" width="71.95" height="10.66" fill="url(#bN)" transform="translate(710.00 289.30) rotate(-149.98)"/>
<rect x="0" y="-5.30" width="104.26" height="10.60" fill="url(#bN)" transform="translate(710.00 289.30) rotate(85.98)"/>
<rect x="0" y="-5.83" width="82.02" height="11.66" fill="url(#bC)" transform="translate(781.70 249.30) rotate(-88.88)"/>
<rect x="0" y="-5.30" width="82.10" height="10.60" fill="url(#bN)" transform="translate(781.70 249.30) rotate(150.84)"/>
<ellipse cx="569.6" cy="322.3" rx="1.8" ry="2.9" fill="#d8d818" transform="rotate(-80.7 569.6 322.3)"/>
<ellipse cx="527.5" cy="373.9" rx="1.8" ry="2.9" fill="#d8d818" transform="rotate(160.3 527.5 373.9)"/>
<ellipse cx="671.3" cy="266.9" rx="1.8" ry="2.9" fill="#d8d818" transform="rotate(-150.0 671.3 266.9)"/>
<ellipse cx="713.4" cy="338.3" rx="1.8" ry="2.9" fill="#d8d818" transform="rotate(86.0 713.4 338.3)"/>
<ellipse cx="782.5" cy="208.4" rx="1.8" ry="2.9" fill="#d8d818" transform="rotate(-88.9 782.5 208.4)"/>
<ellipse cx="758.2" cy="262.4" rx="1.8" ry="2.9" fill="#d8d818" transform="rotate(150.8 758.2 262.4)"/>
<rect x="821.4" y="260.8" width="1.7" height="1.7" fill="#f0f0f0"/><rect x="828.4" y="265.1" width="1.7" height="1.7" fill="#f0f0f0"/><rect x="849.4" y="275.9" width="1.7" height="1.7" fill="#f0f0f0"/><rect x="857.1" y="281.0" width="1.7" height="1.7" fill="#f0f0f0"/><rect x="864.9" y="285.5" width="1.7" height="1.7" fill="#f0f0f0"/><rect x="872.8" y="289.9" width="1.7" height="1.7" fill="#f0f0f0"/>
<circle cx="839.5" cy="271.5" r="5.5" fill="url(#gY)"/>
<circle cx="563.3" cy="361.0" r="27.7" fill="url(#gC)"/>
<circle cx="491.7" cy="386.7" r="27.7" fill="url(#gC)"/>
<circle cx="710.0" cy="289.3" r="26.5" fill="url(#gN)"/>
<circle cx="717.3" cy="393.3" r="32.5" fill="url(#gMn)"/>
<circle cx="863.3" cy="79.0" r="19.5" fill="url(#gH)"/>
<circle cx="781.7" cy="249.3" r="27.7" fill="url(#gC)"/>
<rect x="0" y="-5.82" width="13.67" height="11.63" fill="url(#bHd)" transform="translate(789.04 249.54) rotate(1.91)"/>
<rect x="0" y="-4.95" width="64.23" height="9.89" fill="url(#bO)" transform="translate(720.93 413.49) rotate(79.80)"/>
<ellipse cx="729.2" cy="431.2" rx="1.2" ry="1.8" fill="#d8d818"/>
<rect x="0" y="-5.64" width="61.10" height="11.28" fill="url(#bH)" transform="translate(517.80 232.80) rotate(-79.63)"/>
<rect x="0" y="-5.84" width="77.06" height="11.68" fill="url(#bC)" transform="translate(517.80 232.80) rotate(40.95)"/>
<ellipse cx="525.1" cy="193.1" rx="1.8" ry="2.9" fill="#d8d818" transform="rotate(-79.6 525.1 193.1)"/>
<ellipse cx="546.8" cy="258.0" rx="1.8" ry="2.9" fill="#d8d818" transform="rotate(40.9 546.8 258.0)"/>
<circle cx="517.8" cy="232.8" r="27.8" fill="url(#gC)"/>
<circle cx="528.8" cy="172.7" r="19.7" fill="url(#gH)"/>
<rect x="0" y="-5.70" width="62.34" height="11.40" fill="url(#bH)" transform="translate(647.70 253.30) rotate(-87.89)"/>
<rect x="0" y="-5.86" width="77.72" height="11.73" fill="url(#bC)" transform="translate(576.00 283.30) rotate(-22.70)"/>
<rect x="0" y="-5.75" width="53.81" height="11.49" fill="url(#bH)" transform="translate(783.30 167.30) rotate(-131.99)"/>
<ellipse cx="649.2" cy="212.0" rx="1.8" ry="2.9" fill="#d8d818" transform="rotate(-87.9 649.2 212.0)"/>
<ellipse cx="611.9" cy="268.3" rx="1.8" ry="2.9" fill="#d8d818" transform="rotate(-22.7 611.9 268.3)"/>
<ellipse cx="761.5" cy="143.1" rx="1.8" ry="2.9" fill="#d8d818" transform="rotate(-132.0 761.5 143.1)"/>
<circle cx="576.0" cy="283.3" r="28.0" fill="url(#gC)"/>
<circle cx="647.7" cy="253.3" r="28.0" fill="url(#gC)"/>
<circle cx="783.3" cy="167.3" r="28.0" fill="url(#gC)"/>
<circle cx="752.4" cy="501.8" r="4.4" fill="url(#gY)"/>
<rect x="0" y="-5.27" width="75.21" height="10.54" fill="url(#bOC)" transform="translate(732.30 476.70) rotate(35.80)"/>
<circle cx="732.3" cy="476.7" r="26.5" fill="url(#gO)"/>
<rect x="0" y="-6.01" width="78.22" height="12.02" fill="url(#bC)" transform="translate(876.30 414.00) rotate(96.61)"/>
<rect x="0" y="-5.74" width="60.64" height="11.49" fill="url(#bH)" transform="translate(876.30 414.00) rotate(-19.96)"/>
<ellipse cx="871.8" cy="452.6" rx="1.8" ry="2.9" fill="#d8d818" transform="rotate(96.6 871.8 452.6)"/>
<ellipse cx="913.6" cy="400.5" rx="1.8" ry="2.9" fill="#d8d818" transform="rotate(-20.0 913.6 400.5)"/>
<circle cx="876.3" cy="414.0" r="28.4" fill="url(#gC)"/>
<circle cx="650.0" cy="191.0" r="20.0" fill="url(#gH)"/>
<circle cx="351.7" cy="465.7" r="20.0" fill="url(#gH)"/>
<circle cx="933.3" cy="393.3" r="20.0" fill="url(#gH)"/>
<circle cx="941.7" cy="268.3" r="20.0" fill="url(#gH)"/>
<ellipse cx="883.0" cy="369.7" rx="3.5" ry="5.0" fill="#d8d818"/>
<path d="M0 -7.75 L97.06 -6.25 A5.25 6.25 0 0 1 97.06 6.25 L0 7.75 Z" fill="url(#bCl)" transform="translate(910.00 311.00) rotate(107.45)"/>
<rect x="0" y="-6.18" width="94.30" height="12.35" fill="url(#bC)" transform="translate(703.30 641.70) rotate(90.00)"/>
<rect x="0" y="-6.05" width="89.13" height="12.10" fill="url(#bC)" transform="translate(703.30 641.70) rotate(-24.67)"/>
<ellipse cx="703.3" cy="687.9" rx="1.8" ry="2.9" fill="#d8d818" transform="rotate(90.0 703.3 687.9)"/>
<ellipse cx="743.4" cy="623.3" rx="1.8" ry="2.9" fill="#d8d818" transform="rotate(-24.7 743.4 623.3)"/>
<circle cx="703.3" cy="641.7" r="28.5" fill="url(#gC)"/>
<rect x="0" y="-6.35" width="44.17" height="12.71" fill="url(#bCd)" transform="translate(690.41 634.14) rotate(-149.62)"/>
<ellipse cx="679.4" cy="627.7" rx="1.8" ry="2.9" fill="#d8d818" transform="rotate(-149.6 679.4 627.7)"/>
<circle cx="747.3" cy="127.3" r="20.3" fill="url(#gH)"/>
<rect x="0" y="-6.07" width="79.48" height="12.14" fill="url(#bC)" transform="translate(793.30 520.70) rotate(-21.40)"/>
<rect x="0" y="-6.10" width="84.28" height="12.21" fill="url(#bC)" transform="translate(793.30 520.70) rotate(96.13)"/>
<rect x="0" y="-6.15" width="83.09" height="12.29" fill="url(#bC)" transform="translate(867.30 491.70) rotate(34.95)"/>
<ellipse cx="830.3" cy="506.2" rx="1.8" ry="2.9" fill="#d8d818" transform="rotate(-21.4 830.3 506.2)"/>
<ellipse cx="788.8" cy="562.5" rx="1.8" ry="2.9" fill="#d8d818" transform="rotate(96.1 788.8 562.5)"/>
<ellipse cx="901.1" cy="515.3" rx="1.8" ry="2.9" fill="#d8d818" transform="rotate(35.0 901.1 515.3)"/>
<circle cx="793.3" cy="520.7" r="29.0" fill="url(#gC)"/>
<circle cx="867.3" cy="491.7" r="29.0" fill="url(#gC)"/>
<rect x="0" y="-5.91" width="61.81" height="11.81" fill="url(#bH)" transform="translate(473.30 574.30) rotate(-80.69)"/>
<rect x="0" y="-5.95" width="60.32" height="11.89" fill="url(#bH)" transform="translate(990.30 514.30) rotate(155.52)"/>
<ellipse cx="476.8" cy="553.1" rx="1.8" ry="2.9" fill="#d8d818" transform="rotate(-80.7 476.8 553.1)"/>
<ellipse cx="970.7" cy="523.2" rx="1.8" ry="2.9" fill="#d8d818" transform="rotate(155.5 970.7 523.2)"/>
<circle cx="473.3" cy="574.3" r="20.5" fill="url(#gH)"/>
<circle cx="636.7" cy="722.7" r="20.5" fill="url(#gH)"/>
<circle cx="990.3" cy="514.3" r="20.5" fill="url(#gH)"/>
<rect x="0" y="-5.98" width="61.26" height="11.95" fill="url(#bH)" transform="translate(483.30 513.30) rotate(-5.25)"/>
<rect x="0" y="-6.21" width="83.21" height="12.42" fill="url(#bC)" transform="translate(784.30 604.50) rotate(33.98)"/>
<ellipse cx="522.4" cy="509.7" rx="1.8" ry="2.9" fill="#d8d818" transform="rotate(-5.2 522.4 509.7)"/>
<ellipse cx="818.5" cy="627.6" rx="1.8" ry="2.9" fill="#d8d818" transform="rotate(34.0 818.5 627.6)"/>
<circle cx="483.3" cy="513.3" r="29.3" fill="url(#gC)"/>
<circle cx="784.3" cy="604.5" r="29.3" fill="url(#gC)"/>
<rect x="0" y="-6.08" width="31.22" height="12.16" fill="url(#bHd)" transform="translate(467.38 507.07) rotate(-158.64)"/>
<ellipse cx="459.4" cy="504.0" rx="1.8" ry="2.9" fill="#d8d818" transform="rotate(-158.6 459.4 504.0)"/>
<rect x="0" y="-6.25" width="79.24" height="12.50" fill="url(#bC)" transform="translate(935.40 539.30) rotate(94.42)"/>
<ellipse cx="932.4" cy="578.7" rx="1.8" ry="2.9" fill="#d8d818" transform="rotate(94.4 932.4 578.7)"/>
<circle cx="935.4" cy="539.3" r="29.7" fill="url(#gC)"/>
<circle cx="544.3" cy="507.7" r="21.0" fill="url(#gH)"/>
<circle cx="890.0" cy="124.0" r="21.0" fill="url(#gH)"/>
<circle cx="802.7" cy="250.0" r="21.0" fill="url(#gH)"/>
<rect x="0" y="-6.28" width="82.74" height="12.56" fill="url(#bC)" transform="translate(929.30 618.30) rotate(156.72)"/>
<rect x="0" y="-6.12" width="67.38" height="12.24" fill="url(#bH)" transform="translate(853.30 651.00) rotate(92.81)"/>
<rect x="0" y="-6.12" width="67.80" height="12.24" fill="url(#bH)" transform="translate(929.30 618.30) rotate(37.21)"/>
<ellipse cx="891.3" cy="634.6" rx="1.8" ry="2.9" fill="#d8d818" transform="rotate(156.7 891.3 634.6)"/>
<ellipse cx="851.1" cy="695.8" rx="1.8" ry="2.9" fill="#d8d818" transform="rotate(92.8 851.1 695.8)"/>
<ellipse cx="965.4" cy="645.7" rx="1.8" ry="2.9" fill="#d8d818" transform="rotate(37.2 965.4 645.7)"/>
<circle cx="929.3" cy="618.3" r="30.0" fill="url(#gC)"/>
<circle cx="853.3" cy="651.0" r="30.0" fill="url(#gC)"/>
<rect x="0" y="-6.17" width="78.38" height="12.34" fill="url(#bH)" transform="translate(703.30 736.00) rotate(164.69)"/>
<ellipse cx="649.4" cy="750.8" rx="1.8" ry="2.9" fill="#d8d818" transform="rotate(164.7 649.4 750.8)"/>
<circle cx="703.3" cy="736.0" r="30.5" fill="url(#gC)"/>
<rect x="0" y="-6.31" width="28.62" height="12.63" fill="url(#bHd)" transform="translate(714.29 747.24) rotate(45.64)"/>
<circle cx="627.7" cy="756.7" r="21.5" fill="url(#gH)"/>
<circle cx="983.3" cy="659.3" r="21.5" fill="url(#gH)"/>
<circle cx="850.0" cy="718.3" r="21.5" fill="url(#gH)"/>
<circle cx="641.7" cy="735.7" r="4.8" fill="url(#gY)"/>
<circle cx="438.3" cy="495.7" r="21.7" fill="url(#gH)"/>
<rect x="0" y="-6.49" width="70.98" height="12.97" fill="url(#bH)" transform="translate(647.30 541.00) rotate(85.96)"/>
<rect x="0" y="-6.49" width="71.02" height="12.97" fill="url(#bH)" transform="translate(586.70 639.00) rotate(-22.52)"/>
<ellipse cx="649.0" cy="564.4" rx="1.8" ry="2.9" fill="#d8d818" transform="rotate(86.0 649.0 564.4)"/>
<ellipse cx="608.4" cy="630.0" rx="1.8" ry="2.9" fill="#d8d818" transform="rotate(-22.5 608.4 630.0)"/>
<circle cx="647.3" cy="541.0" r="22.5" fill="url(#gH)"/>
<circle cx="586.7" cy="639.0" r="22.5" fill="url(#gH)"/>
<circle cx="734.3" cy="767.7" r="22.5" fill="url(#gH)"/>
<circle cx="652.3" cy="611.8" r="32.2" fill="url(#gC)"/>
<rect x="0" y="-6.70" width="24.06" height="13.40" fill="url(#bHd)" transform="translate(663.23 619.03) rotate(33.48)"/>
<circle cx="910.0" cy="311.0" r="36.5" fill="url(#gCl)"/>
<circle cx="683.3" cy="632.3" r="24.0" fill="url(#gH)"/>
<g>
<line x1="328.1" y1="739.1" x2="338.5" y2="706" stroke="#00e000" stroke-width="5"/>
<polygon points="341.6,696.3 333.5,705.0 343.5,708.2" fill="#00c800"/>
<line x1="328.1" y1="739.1" x2="358.5" y2="748.2" stroke="#f00000" stroke-width="5"/>
<polygon points="369.7,752.3 361.5,743.7 357.2,754.2" fill="#e00000"/>
<circle cx="328.1" cy="739.1" r="5.2" fill="#0000a8"/>
</g>
</svg>
</div>
</body></html>
